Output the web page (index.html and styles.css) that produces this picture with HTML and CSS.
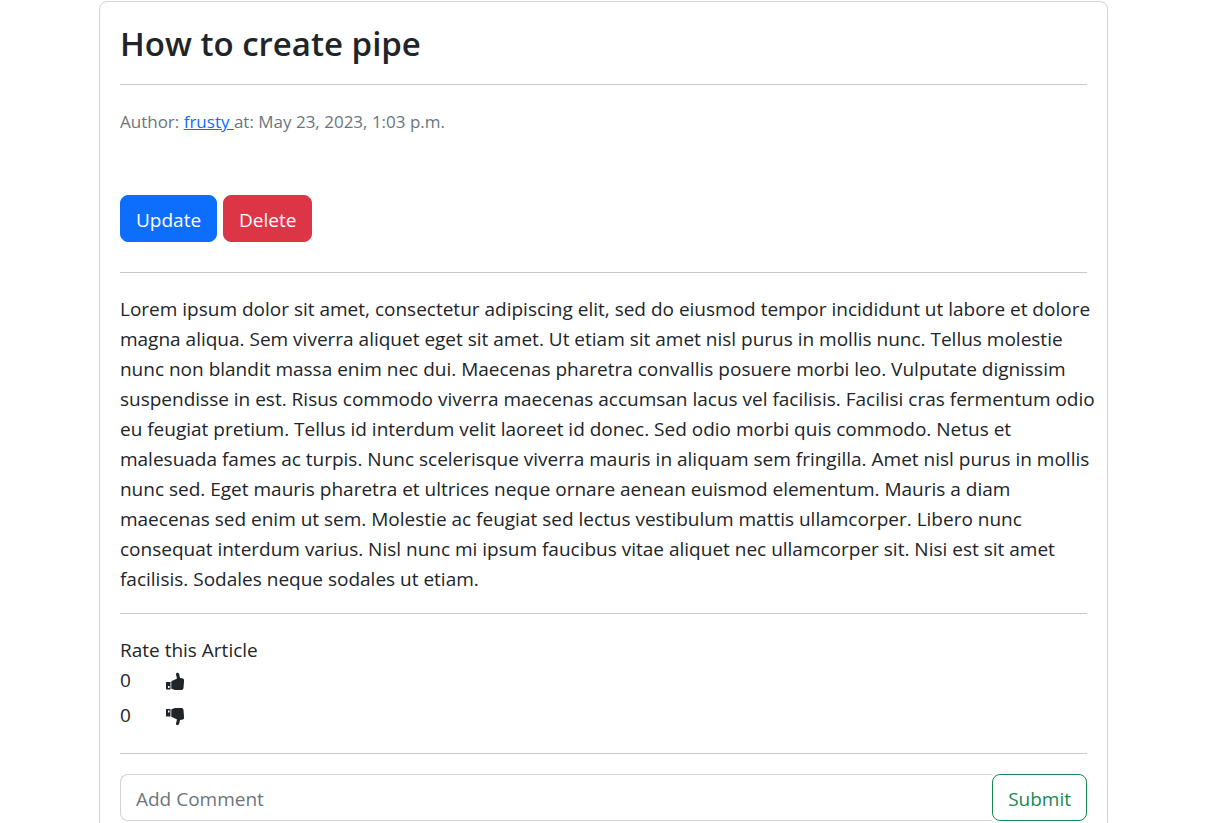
FILE: index.html
```html
<!DOCTYPE html>
<html lang="en">
<head>
<meta charset="utf-8">
<meta name="viewport" content="width=device-width, initial-scale=1">
<title>How to create pipe</title>
<link rel="stylesheet" href="styles.css">
</head>
<body>
<main class="card">
  <h1 class="title">How to create pipe</h1>
  <hr>
  <p class="meta">Author: <a href="#author">frusty </a>at: May 23, 2023, 1:03 p.m.</p>
  <div class="actions">
    <button class="btn update" type="button">Update</button>
    <button class="btn delete" type="button">Delete</button>
  </div>
  <hr>
  <p class="content">Lorem ipsum dolor sit amet, consectetur adipiscing elit, sed do eiusmod tempor incididunt ut labore et dolore<br>
    magna aliqua. Sem viverra aliquet eget sit amet. Ut etiam sit amet nisl purus in mollis nunc. Tellus molestie<br>
    nunc non blandit massa enim nec dui. Maecenas pharetra convallis posuere morbi leo. Vulputate dignissim<br>
    suspendisse in est. Risus commodo viverra maecenas accumsan lacus vel facilisis. Facilisi cras fermentum odio<br>
    eu feugiat pretium. Tellus id interdum velit laoreet id donec. Sed odio morbi quis commodo. Netus et<br>
    malesuada fames ac turpis. Nunc scelerisque viverra mauris in aliquam sem fringilla. Amet nisl purus in mollis<br>
    nunc sed. Eget mauris pharetra et ultrices neque ornare aenean euismod elementum. Mauris a diam<br>
    maecenas sed enim ut sem. Molestie ac feugiat sed lectus vestibulum mattis ullamcorper. Libero nunc<br>
    consequat interdum varius. Nisl nunc mi ipsum faucibus vitae aliquet nec ullamcorper sit. Nisi est sit amet<br>
    facilisis. Sodales neque sodales ut etiam.</p>
  <hr>
  <section class="rating">
    <p class="label">Rate this Article</p>
    <div class="vote"><span class="count">0</span>
      <button class="thumb" type="button" aria-label="Like"><svg viewBox="0 0 20 20"><path fill-rule="evenodd" d="M1 11h4.500v7.500H1zM3 15h1.500v2H3zM6.300 10.200C8 9.500 10 8.500 12 7.500L11 3.500C10.800 1.500 13.500 1.200 14.200 3.200L15 7 18 7.500C19 7.800 19.200 9 19 10.500L18.500 17C18.300 18.500 17.500 19 16 19H10L6.300 17.800z"/></svg></button></div>
    <div class="vote"><span class="count">0</span>
      <button class="thumb" type="button" aria-label="Dislike"><svg viewBox="0 0 20 20"><path fill-rule="evenodd" d="M1 3h4.500v7.500H1zM3 4.500h1.500v2H3zM6.300 3.200L10 2H16C17.500 2 18.300 2.500 18.500 4L19 10.500C19.200 12 19 13.200 18 13.500L15 14 14.200 17.800C13.500 19.800 10.800 19.500 11 17.500L12 13.500C10 12.500 8 11.500 6.300 10.800z"/></svg></button></div>
  </section>
  <hr class="form-rule">
  <form class="comment">
    <input type="text" placeholder="Add Comment" aria-label="Add Comment">
    <button class="btn submit" type="button">Submit</button>
  </form>
</main>
</body>
</html>
```

FILE: styles.css
```css
* { box-sizing: border-box; }
body {
  margin: 0;
  padding-right: 7px;
  font: 19px/30px "Segoe UI", "Open Sans", "Noto Sans", sans-serif;
  color: #212529;
  background: #fff;
}
.card {
  width: 83.6%;
  margin: 1px auto 0;
  padding: 21px 20px 40px;
  border: 1px solid #d3d3d4;
  border-radius: 8px;
}
h1, p { margin: 0; }
hr { margin: 19px 0 21px; border: 0; border-top: 1px solid #c8c9ca; }
.form-rule { margin-bottom: 20px; }
.title { font-size: 33px; line-height: 42px; font-weight: 600; }
.meta { color: #6c757d; font-size: 17px; line-height: 32px; }
.meta a { color: #0d6efd; }
.actions { display: flex; gap: 6px; margin: 57px 0 30px; }
.btn {
  height: 47px;
  padding: 2px 15px 0;
  font: inherit;
  border: 1px solid;
  border-radius: 8px;
}
.update { color: #fff; background: #0d6efd; border-color: #0d6efd; }
.delete { color: #fff; background: #dc3545; border-color: #dc3545; }
.content { white-space: nowrap; }
.rating { margin-bottom: 23px; }
.vote { display: flex; align-items: center; height: 30px; }
.vote + .vote { margin-top: 5px; }
.count { width: 45px; }
.thumb { display: flex; padding: 2px 0 0; border: 0; background: none; }
.thumb svg { width: 20px; height: 20px; fill: #212529; }
.comment { display: flex; }
.comment input {
  flex: 1;
  min-width: 0;
  height: 47px;
  padding: 2px 15px 0;
  font: inherit;
  border: 1px solid #ced4da;
  border-radius: 8px 0 0 8px;
  border-right: 0;
}
.comment input::placeholder { color: #6c757d; opacity: 1; }
.submit { color: #198754; background: #fff; border-color: #198754; }

@media (max-width: 1200px) {
  .content { white-space: normal; }
  .content br { display: none; }
}
```
